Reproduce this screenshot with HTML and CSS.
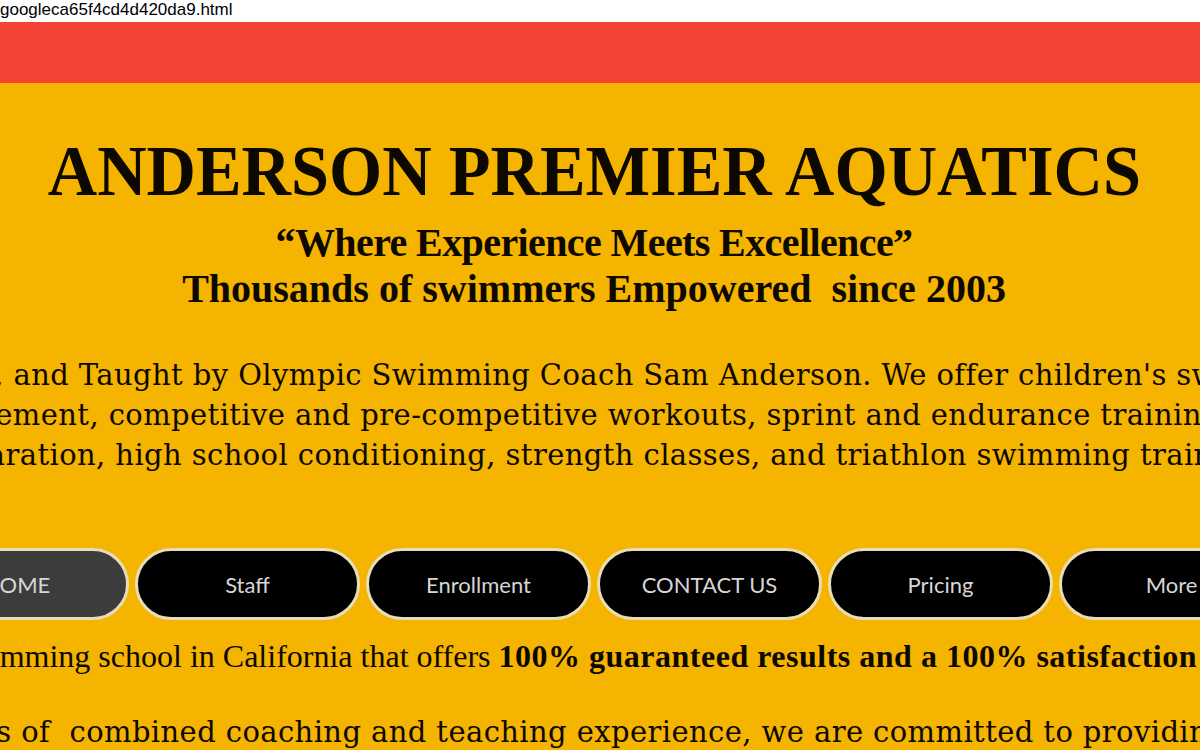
FILE: index.html
```html
<!DOCTYPE html>
<html lang="en">
<head>
<meta charset="utf-8">
<title>Anderson Premier Aquatics</title>
<link rel="stylesheet" href="styles.css">
</head>
<body>
<div class="file">googleca65f4cd4d420da9.html</div>
<div class="topbar"></div>
<main class="page">
  <h1 class="title"><span>ANDERSON PREMIER AQUATICS</span></h1>
  <div class="tagline">
    <div class="line quote"><span>“Where Experience Meets Excellence”</span></div>
    <div class="line"><span>Thousands of swimmers Empowered&nbsp; since 2003</span></div>
  </div>
  <div class="intro">
    <div class="line"><span>Owned, Operated, and Taught by Olympic Swimming Coach Sam Anderson. We offer children's swimming lessons,</span></div>
    <div class="line"><span>stroke improvement, competitive and pre-competitive workouts, sprint and endurance training, swim meet</span></div>
    <div class="line"><span>preparation, high school conditioning, strength classes, and triathlon swimming training.</span></div>
  </div>
  <nav class="menu">
    <a class="btn active" href="#">HOME</a>
    <a class="btn" href="#">Staff</a>
    <a class="btn" href="#">Enrollment</a>
    <a class="btn" href="#">CONTACT US</a>
    <a class="btn" href="#">Pricing</a>
    <a class="btn" href="#">More</a>
  </nav>
  <div class="promise">
    <div class="line"><span>The only swimming school in California that offers <b>100% guaranteed results and a 100% satisfaction guarantee.</b></span></div>
  </div>
  <div class="experience">
    <div class="line"><span>With well over 60 years of&nbsp; combined coaching and teaching experience, we are committed to providing the best instruction</span></div>
  </div>
</main>
</body>
</html>
```
FILE: styles.css
```css
html, body {
  margin: 0;
  padding: 0;
  height: 750px;
  overflow: hidden;
  background: #f4b400;
}

.file {
  height: 22px;
  background: #ffffff;
  color: #000000;
  font-family: "Liberation Sans", Arial, sans-serif;
  font-size: 17px;
  line-height: 20px;
}

.topbar {
  height: 61px;
  background: #f44336;
}

.page {
  background: #f4b400;
  color: #0d0900;
  padding: 48px 12px 0 0;
  height: 617px;
  box-sizing: border-box;
}

.line {
  display: flex;
  justify-content: center;
  white-space: nowrap;
}

.title {
  margin: 0;
  display: flex;
  justify-content: center;
  font-family: "Liberation Serif", "Times New Roman", serif;
  font-weight: 700;
  font-size: 72px;
  line-height: 80px;
  white-space: nowrap;
}

.title span {
  display: inline-block;
  transform: scaleX(0.95);
}

.tagline {
  margin-top: 9px;
  font-family: "Liberation Serif", "Times New Roman", serif;
  font-weight: 700;
  font-size: 40px;
  line-height: 46px;
}

.tagline .quote {
  letter-spacing: -0.6px;
}

.intro {
  margin-top: 43px;
  font-family: "DejaVu Serif", serif;
  font-size: 29px;
  letter-spacing: 0.4px;
  line-height: 40px;
}

.menu {
  margin-top: 73px;
  display: flex;
  justify-content: center;
  gap: 6px;
}

.btn {
  flex: 0 0 225px;
  height: 72px;
  box-sizing: border-box;
  border: 3px solid #e9dcb8;
  border-radius: 36px;
  background: #000000;
  color: #d6d6d6;
  font-family: Lato, "Open Sans", sans-serif;
  font-size: 22px;
  display: flex;
  align-items: center;
  justify-content: center;
  text-decoration: none;
}

.btn.active {
  background: #3c3c3c;
}

.promise {
  margin-top: 16px;
  font-family: "Liberation Serif", "Times New Roman", serif;
  font-size: 32px;
  line-height: 40px;
}

.promise b {
  letter-spacing: 0.5px;
}

.experience {
  margin-top: 36px;
  font-family: "DejaVu Serif", serif;
  font-size: 29px;
  letter-spacing: 0.4px;
  line-height: 40px;
}
```
